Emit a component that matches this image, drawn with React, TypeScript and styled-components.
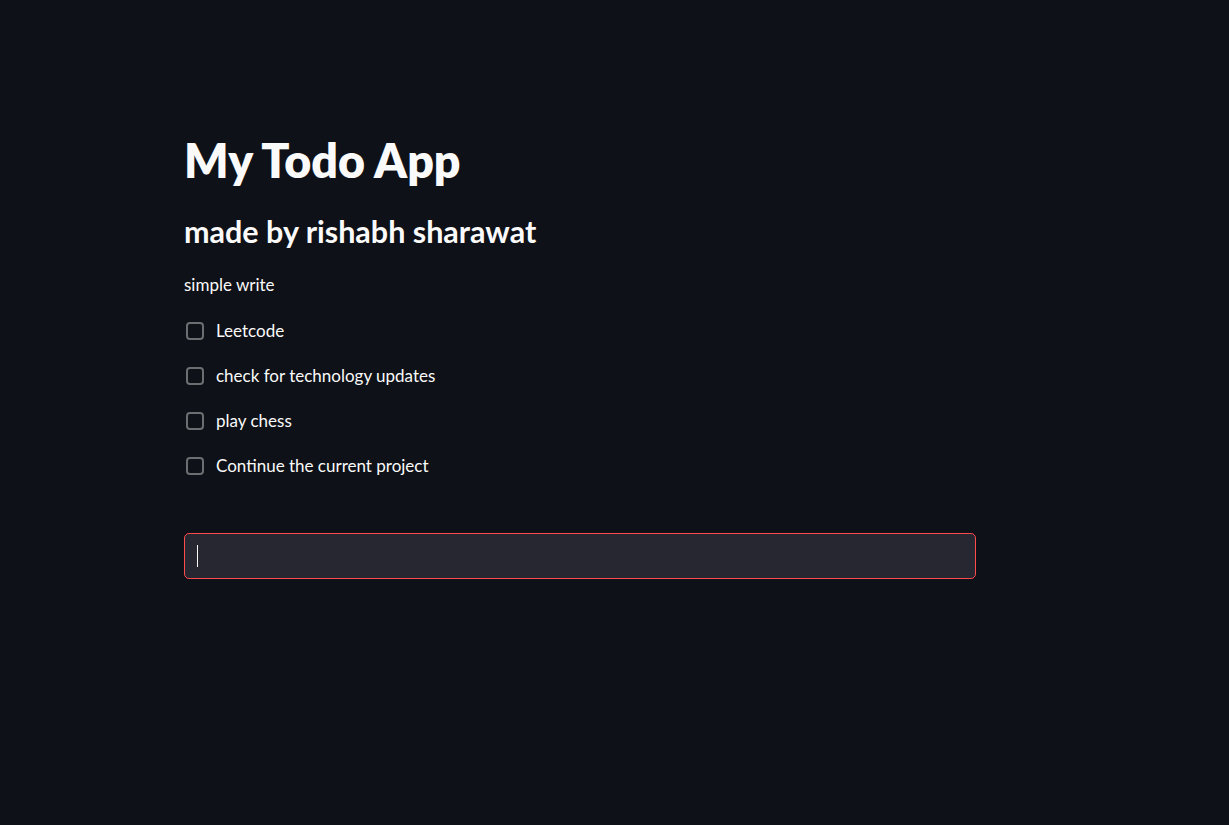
import styled, { createGlobalStyle } from "styled-components";

const GlobalStyle = createGlobalStyle`
  html, body {
    margin: 0;
    padding: 0;
    background: #0e1117;
    color: #fafafa;
    font-family: Lato, "Noto Sans", sans-serif;
  }
`;

const todos = [
  "Leetcode",
  "check for technology updates",
  "play chess",
  "Continue the current project",
];

export default function App() {
  return (
    <>
      <GlobalStyle />
      <Page>
        <Main>
          <Title>My Todo App</Title>
          <Subtitle>made by rishabh sharawat</Subtitle>
          <Text>simple write</Text>
          <List>
            {todos.map((t) => (
              <Row key={t}>
                <Box />
                <Label>{t}</Label>
              </Row>
            ))}
          </List>
          <Input>
            <Caret />
          </Input>
        </Main>
      </Page>
    </>
  );
}

const Page = styled.div`
  min-height: 825px;
  background: #0e1117;
  padding: 0 0 0 184px;
`;

const Main = styled.div`
  width: 792px;
  padding-top: 132px;
  display: flex;
  flex-direction: column;
`;

const Title = styled.h1`
  margin: 0;
  font-size: 46.5px;
  font-weight: 800;
  line-height: 56px;
`;

const Subtitle = styled.h2`
  margin: 23px 0 0;
  font-size: 30.5px;
  font-weight: 700;
  line-height: 40px;
`;

const Text = styled.p`
  margin: 22px 0 0;
  font-size: 17px;
  line-height: 24px;
`;

const List = styled.div`
  margin-top: 11px;
  display: flex;
  flex-direction: column;
`;

const Row = styled.div`
  height: 45px;
  display: flex;
  align-items: center;
  gap: 12px;
  padding-left: 2px;
`;

const Box = styled.span`
  width: 14px;
  height: 14px;
  border: 2px solid rgba(250, 250, 250, 0.4);
  border-radius: 4px;
`;

const Label = styled.span`
  font-size: 17px;
`;

const Input = styled.div`
  margin-top: 45px;
  height: 44px;
  background: #262730;
  border: 1px solid #ff4b4b;
  border-radius: 5px;
  display: flex;
  align-items: center;
  padding-left: 12px;
`;

const Caret = styled.span`
  width: 1px;
  height: 22px;
  background: #fafafa;
`;
